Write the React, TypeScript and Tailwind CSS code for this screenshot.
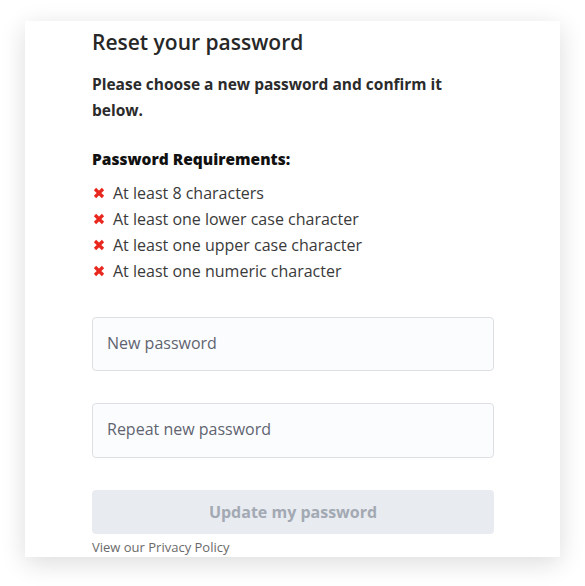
import React from "react";

const reqs = [
  "At least 8 characters",
  "At least one lower case character",
  "At least one upper case character",
  "At least one numeric character",
];

function XIcon() {
  return (
    <svg width="12" height="12" viewBox="0 0 12 12" className="shrink-0">
      <path d="M2 2 L10 10 M10 2 L2 10" stroke="#e8281e" strokeWidth="3.2" strokeLinecap="butt" />
    </svg>
  );
}

export default function App() {
  return (
    <div className="w-[585px] h-[586px] bg-white pt-[21px] px-[25px]" style={{ fontFamily: "'Open Sans', 'Noto Sans', sans-serif" }}>
      <div className="w-[535px] h-[536px] bg-white overflow-hidden shadow-[0_6px_24px_rgba(0,0,0,0.14)] pl-[67px] pr-[66px] pt-[6px]">
        <h1 className="text-[21px] leading-[30px] font-semibold text-[#272727]">Reset your password</h1>
        <p className="mt-[14px] text-[15.5px] leading-[26px] font-bold text-[#2b2b2b]">
          Please choose a new password and confirm it below.
        </p>
        <h2 className="mt-[23px] text-[15.5px] leading-[26px] font-extrabold text-[#111]">Password Requirements:</h2>
        <ul className="mt-[8px] flex flex-col">
          {reqs.map((r) => (
            <li key={r} className="flex items-center gap-[8px] text-[16px] leading-[26px] text-[#3a3a3a] pl-[1px]">
              <XIcon />
              <span>{r}</span>
            </li>
          ))}
        </ul>
        <div className="mt-[33px] h-[54px] rounded-[4px] border border-[#dedfe3] bg-[#fbfcfe] flex items-center px-[14px] pb-[3px] text-[16px] text-[#5f6470]">
          New password
        </div>
        <div className="mt-[32px] h-[55px] rounded-[4px] border border-[#dedfe3] bg-[#fbfcfe] flex items-center px-[14px] pb-[4px] text-[16px] text-[#5f6470]">
          Repeat new password
        </div>
        <div className="mt-[32px] h-[44px] rounded-[4px] bg-[#e8ebf0] flex items-center justify-center text-[16px] font-bold text-[#a3a9b3]">
          Update my password
        </div>
        <div className="mt-[4px] text-[13px] leading-[18px] text-[#6a6a6a]">View our Privacy Policy</div>
      </div>
    </div>
  );
}
